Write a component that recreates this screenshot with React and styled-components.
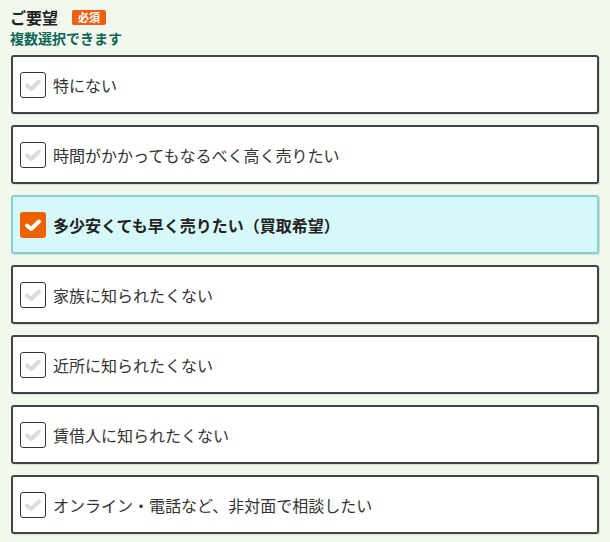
import styled, { createGlobalStyle } from "styled-components";

const GlobalStyle = createGlobalStyle`
  body {
    margin: 0;
    background: #f3f8ee;
    font-family: "Noto Sans CJK JP", "Noto Sans", sans-serif;
    color: #333;
  }
`;

const Wrapper = styled.div`
  padding: 6px 11px 7px;
`;

const Heading = styled.div`
  display: flex;
  align-items: center;
  gap: 14px;
  margin-left: -1px;
`;

const Title = styled.span`
  font-size: 16px;
  font-weight: 700;
  line-height: 22px;
  color: #222;
`;

const Badge = styled.span`
  display: inline-block;
  background: #ee6010;
  color: #fff;
  font-size: 11px;
  font-weight: 700;
  line-height: 15px;
  padding: 0 6px;
  border-radius: 2px;
`;

const Note = styled.div`
  margin-left: -1px;
  font-size: 14px;
  font-weight: 700;
  line-height: 20px;
  color: #0c6656;
  margin-bottom: 7px;
`;

const List = styled.div`
  display: flex;
  flex-direction: column;
  gap: 11px;
`;

const Option = styled.label`
  display: flex;
  align-items: center;
  gap: 7px;
  height: 59px;
  box-sizing: border-box;
  padding: 0 7px;
  border: 2px solid ${(p) => (p.$checked ? "#86d2d2" : "#444")};
  border-radius: 3px;
  background: ${(p) => (p.$checked ? "#d7f8f8" : "#fff")};
  box-shadow: 1px 1px 1px rgba(0, 0, 0, 0.12);
  cursor: pointer;
`;

const Box = styled.span`
  display: flex;
  align-items: center;
  justify-content: center;
  width: 26px;
  height: 26px;
  box-sizing: border-box;
  border-radius: 3px;
  border: ${(p) => (p.$checked ? "none" : "1px solid #333")};
  background: ${(p) => (p.$checked ? "#ee6100" : "#fff")};
  flex-shrink: 0;
`;

const Label = styled.span`
  font-size: 16px;
  font-weight: ${(p) => (p.$checked ? 700 : 400)};
  color: ${(p) => (p.$checked ? "#222" : "#333")};
`;

const options = [
  { text: "特にない" },
  { text: "時間がかかってもなるべく高く売りたい" },
  { text: "多少安くても早く売りたい（買取希望）", checked: true },
  { text: "家族に知られたくない" },
  { text: "近所に知られたくない" },
  { text: "賃借人に知られたくない" },
  { text: "オンライン・電話など、非対面で相談したい" },
];

function Check({ checked }) {
  return (
    <svg width="18" height="14" viewBox="0 0 18 14">
      <path
        d="M3 7.5 L7.2 11 L15 3.5"
        fill="none"
        stroke={checked ? "#fff" : "#dcdcdc"}
        strokeWidth="4"
        strokeLinecap="round"
        strokeLinejoin="round"
      />
    </svg>
  );
}

export default function App() {
  return (
    <>
      <GlobalStyle />
      <Wrapper>
        <Heading>
          <Title>ご要望</Title>
          <Badge>必須</Badge>
        </Heading>
        <Note>複数選択できます</Note>
        <List>
          {options.map((o) => (
            <Option key={o.text} $checked={o.checked}>
              <Box $checked={o.checked}>
                <Check checked={o.checked} />
              </Box>
              <Label $checked={o.checked}>{o.text}</Label>
            </Option>
          ))}
        </List>
      </Wrapper>
    </>
  );
}
